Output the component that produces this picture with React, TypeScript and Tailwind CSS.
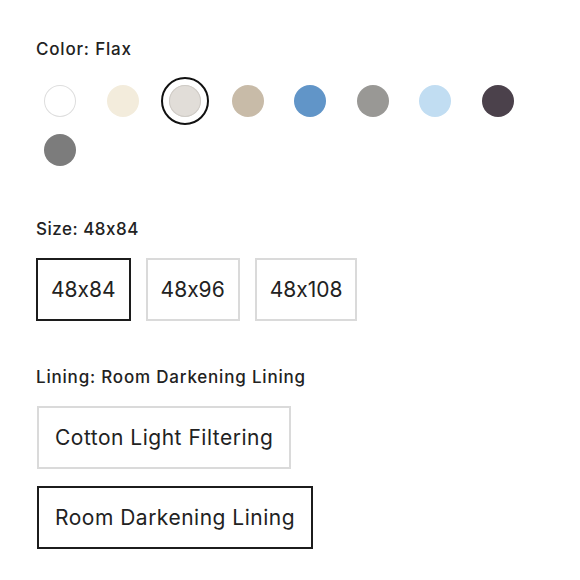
import React from "react";

type Swatch = { name: string; fill: string; edge?: string };

const swatches: Swatch[] = [
  { name: "White", fill: "#ffffff", edge: "#dedede" },
  { name: "Ivory", fill: "#f3ecdc" },
  { name: "Flax", fill: "#e1ddd8", edge: "#cfcbc6" },
  { name: "Sand", fill: "#c8bba8" },
  { name: "Denim", fill: "#6195c8" },
  { name: "Stone", fill: "#999895" },
  { name: "Sky", fill: "#c1ddf2" },
  { name: "Plum", fill: "#4b414b" },
  { name: "Charcoal", fill: "#7c7c7c" },
];

const sizes = ["48x84", "48x96", "48x108"];
const linings = ["Cotton Light Filtering", "Room Darkening Lining"];

function OptionBox({ label, active, compact }: { label: string; active: boolean; compact?: boolean }) {
  return (
    <button
      className={
        "h-[63px] bg-white text-[21px] leading-none text-[#222] " +
        (compact ? "px-[13px] tracking-normal " : "px-[16px] tracking-[0.5px] ") +
        (active ? "border-[2px] border-[#1c1c1c]" : "border-[2px] border-[#dadada]")
      }
    >
      {label}
    </button>
  );
}

export default function App() {
  const color = "Flax";
  const size = "48x84";
  const lining = "Room Darkening Lining";

  return (
    <div
      className="w-[580px] h-[580px] bg-white pl-[36px] pt-[38px] text-[#222] [font-feature-settings:'calt'_0]"
      style={{ fontFamily: "Inter, 'Liberation Sans', sans-serif" }}
    >
      <div className="text-[17px] leading-[22px] font-medium tracking-[0.8px]">Color: {color}</div>
      <div className="mt-[17px] grid grid-cols-[repeat(8,48px)] gap-x-[14.5px] gap-y-[1px]">
        {swatches.map((s) => (
          <div key={s.name} className="w-[48px] h-[48px] flex items-center justify-center">
            <div
              className={
                "w-[48px] h-[48px] rounded-full flex items-center justify-center " +
                (s.name === color ? "border-[2px] border-[#111]" : "")
              }
            >
              <span
                className="block w-[32px] h-[32px] rounded-full"
                style={{ background: s.fill, boxShadow: s.edge ? `inset 0 0 0 1px ${s.edge}` : undefined }}
              />
            </div>
          </div>
        ))}
      </div>

      <div className="mt-[44px] text-[17px] leading-[22px] font-medium tracking-[0.5px]">Size: {size}</div>
      <div className="mt-[18px] flex gap-[15px]">
        {sizes.map((s) => (
          <OptionBox key={s} label={s} active={s === size} compact />
        ))}
      </div>

      <div className="mt-[45px] text-[17px] leading-[22px] font-medium tracking-[0.8px]">Lining: {lining}</div>
      <div className="mt-[18px] flex flex-col items-start gap-[17px] pl-px">
        {linings.map((l) => (
          <OptionBox key={l} label={l} active={l === lining} />
        ))}
      </div>
    </div>
  );
}
